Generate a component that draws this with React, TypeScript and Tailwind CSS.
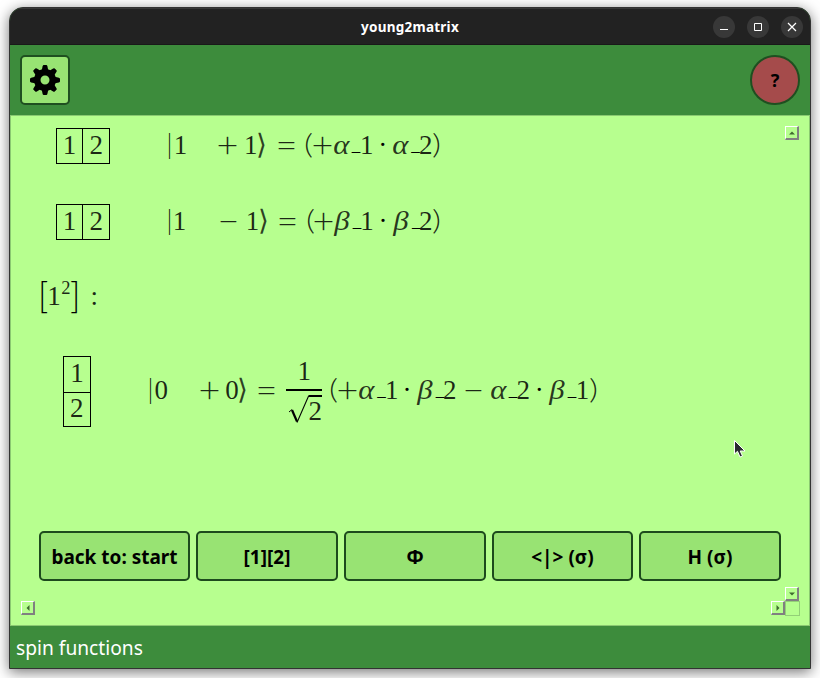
import React from "react";

type Kind = "num" | "greek" | "op" | "dot" | "bar" | "paren" | "angle" | "under" | "bracket" | "sup" | "colon";
type Glyph = [string, number, Kind];

const kinds: Record<Kind, string> = {
  num: "font-['Liberation_Serif',serif] text-[27px] text-black/85",
  greek: "font-['Liberation_Serif',serif] italic text-[28px] text-black/80 scale-x-[1.1]",
  op: "font-['Lato',sans-serif] font-light text-[36px] text-black/85 translate-y-[4px] scale-x-[1.05]",
  dot: "font-['Liberation_Serif',serif] text-[27px]",
  bar: "font-['Lato',sans-serif] font-light text-[27px] text-black/90",
  paren: "font-['Lato',sans-serif] font-light text-[27px] text-black/85 scale-x-[1.3]",
  angle: "font-['DejaVu_Sans',sans-serif] font-extralight text-[28px] text-black/75",
  under: "font-['Liberation_Serif',serif] text-[17px] -translate-y-[3px]",
  bracket: "font-['Lato',sans-serif] font-light text-[35px] translate-y-[3px]",
  sup: "font-['Liberation_Serif',serif] text-[18.5px] text-black/85 -translate-y-[11px]",
  colon: "font-['Liberation_Serif',serif] text-[27px] text-black/85",
};

/* Each glyph is centred on its own x, measured from the left of the line. */
function Line({ glyphs, className = "" }: { glyphs: Glyph[]; className?: string }) {
  return (
    <div className={`flex items-baseline leading-[0] ${className}`}>
      <span className="h-[25px] w-0 shrink-0" />
      {glyphs.map(([c, x, kind], i) => (
        <span
          key={i}
          className="flex w-0 shrink-0 justify-center whitespace-pre"
          style={{ marginLeft: x - (i ? glyphs[i - 1][1] : 0) }}
        >
          <span className={`block ${kinds[kind]}`}>{c}</span>
        </span>
      ))}
    </div>
  );
}

const plusLine: Glyph[] = [
  ["|", 148.5, "bar"], ["1", 159.5, "num"], ["+", 206.7, "op"], ["1", 229.7, "num"], ["⟩", 240.5, "angle"],
  ["=", 265, "op"], ["(", 287.5, "paren"], ["+", 301.7, "op"], ["α", 320.5, "greek"], ["_", 335, "under"],
  ["1", 345.7, "num"], ["·", 361.7, "dot"], ["α", 379.5, "greek"], ["_", 394.5, "under"], ["2", 404.7, "num"],
  [")", 416, "paren"],
];

const minusLine: Glyph[] = [
  ["|", 148.5, "bar"], ["1", 158.5, "num"], ["−", 207.7, "op"], ["1", 231.5, "num"], ["⟩", 242.5, "angle"],
  ["=", 266, "op"], ["(", 289.3, "paren"], ["+", 302.7, "op"], ["β", 321, "greek"], ["_", 336, "under"],
  ["1", 346, "num"], ["·", 362, "dot"], ["β", 380, "greek"], ["_", 395.3, "under"], ["2", 404.7, "num"],
  [")", 416, "paren"],
];

const zeroLeft: Glyph[] = [
  ["|", 129.5, "bar"], ["0", 140.3, "num"], ["+", 188.7, "op"], ["0", 211, "num"], ["⟩", 221.5, "angle"], ["=", 245.5, "op"],
];

const zeroRight: Glyph[] = [
  ["(", 11.5, "paren"], ["+", 25.7, "op"], ["α", 44.5, "greek"], ["_", 59.5, "under"], ["1", 69.7, "num"],
  ["·", 85, "dot"], ["β", 103, "greek"], ["_", 118, "under"], ["2", 127.7, "num"], ["−", 151, "op"],
  ["α", 176.5, "greek"], ["_", 191, "under"], ["2", 201.3, "num"], ["·", 217.3, "dot"], ["β", 235.5, "greek"],
  ["_", 250, "under"], ["1", 260.5, "num"], [")", 271.7, "paren"],
];

const partition: Glyph[] = [
  ["[", 22.3, "bracket"], ["1", 33, "num"], ["2", 45, "sup"], ["]", 54.2, "bracket"], [":", 73.3, "colon"],
];

function RowTableau() {
  return (
    <div className="-mr-[89px] ml-[35px] flex h-9 w-[54px] shrink-0 border border-black">
      <Line className="w-[26px] border-r border-black" glyphs={[["1", 12.5, "num"]]} />
      <Line glyphs={[["2", 13.3, "num"]]} />
    </div>
  );
}

function ColumnTableau() {
  return (
    <div className="-mr-[70px] ml-[42px] h-[71px] w-[28px] shrink-0 border border-black">
      <Line className="h-9 border-b border-black" glyphs={[["1", 13, "num"]]} />
      <Line className="-mt-px" glyphs={[["2", 12.7, "num"]]} />
    </div>
  );
}

type Dir = "up" | "down" | "left" | "right";
const arrows: Record<Dir, string> = {
  up: "M3 7.5h6L6 4.5z",
  down: "M3 4.5h6L6 7.5z",
  left: "M7.5 3v6L4.5 6z",
  right: "M4.5 3v6L7.5 6z",
};

function ScrollButton({ dir }: { dir: Dir }) {
  return (
    <button className="h-[14px] w-[14px] shrink-0 border-t border-r-2 border-b-2 border-l border-t-white border-r-[#808080] border-b-[#808080] border-l-white bg-[#b7ff8f]">
      <svg className="block" width="11" height="11" viewBox="0 0 11 11"><path d={arrows[dir]} fill="#3f6b2f" /></svg>
    </button>
  );
}

function NavButton({ label, wide = "w-[142px]" }: { label: string; wide?: string }) {
  return (
    <button className={`h-[50px] shrink-0 rounded-[5px] border-2 border-[#1d4a1d] bg-[#98e373] pt-[2px] text-[19px] font-bold whitespace-nowrap ${wide}`}>
      {label}
    </button>
  );
}

export default function App() {
  return (
    <div className="h-[678px] w-[820px] overflow-hidden bg-white pt-[7px] pl-[9px] font-['Noto_Sans','Open_Sans',sans-serif] text-black">
      <div className="flex h-[662px] w-[802px] flex-col overflow-hidden rounded-t-[14px] border border-[#333333] bg-[#3d8c3c] shadow-[0_3px_14px_rgba(0,0,0,0.55)]">
        <header className="grid h-[37px] shrink-0 grid-cols-[1fr_auto_1fr] items-center border-t border-b border-t-[#383838] border-b-[#191919] bg-[#222222] text-white">
          <span />
          <h1 className="pt-px text-[13.5px] font-bold tracking-[0.25px]">young2matrix</h1>
          <div className="mr-[7px] flex justify-end gap-3">
            <span className="grid h-[22px] w-[22px] place-items-center rounded-full bg-[#383838]">
              <svg width="10" height="10"><path d="M1 7.5h8" stroke="white" /></svg>
            </span>
            <span className="grid h-[22px] w-[22px] place-items-center rounded-full bg-[#383838]">
              <svg width="10" height="10"><path d="M1.5 1.5h7v7h-7z" stroke="white" fill="none" /></svg>
            </span>
            <span className="grid h-[22px] w-[22px] place-items-center rounded-full bg-[#383838]">
              <svg width="10" height="10"><path d="M1 1l8 8M9 1L1 9" stroke="white" strokeWidth="1.2" /></svg>
            </span>
          </div>
        </header>

        <div className="flex h-[70px] shrink-0 items-center justify-between px-[10px]">
          <button className="grid h-[50px] w-[50px] place-items-center rounded-[5px] border-2 border-[#1f4f20] bg-[#98e373]">
            <svg width="30" height="30" viewBox="0 0 24 24" fill="black">
              <path fillRule="evenodd" d="M12 3.2a8.8 8.8 0 1 0 0 17.6a8.8 8.8 0 0 0 0-17.6M12 8.4a3.6 3.6 0 1 1 0 7.2a3.6 3.6 0 0 1 0-7.2" />
              {[0, 45, 90, 135, 180, 225, 270, 315].map((a) => (
                <path key={a} d="M9.2 5L10.1 .9Q10.3 0 11 0h2q.7 0 .9.9L14.8 5z" transform={`rotate(${a} 12 12)`} />
              ))}
            </svg>
          </button>
          <button className="grid h-[50px] w-[50px] place-items-center rounded-full border-2 border-[#1f4f20] bg-[#a54b4b] pt-px text-[18px] font-bold">?</button>
        </div>

        <main className="relative grid h-[511px] shrink-0 grid-cols-[764px_15px] grid-rows-[475px_15px] border border-[#8ac971] bg-[#b7ff8f] p-[10px]">
          <section>
            <div className="flex h-[76px] pt-[2px]">
              <RowTableau />
              <Line className="h-9 pt-px" glyphs={plusLine} />
            </div>
            <div className="flex h-[76px] pt-[2px]">
              <RowTableau />
              <Line className="h-9 pt-px" glyphs={minusLine} />
            </div>
            <div className="flex h-[78px] pt-[2px]">
              <Line glyphs={partition} />
            </div>
            <div className="flex h-[175px]">
              <ColumnTableau />
              <div className="w-[265px] shrink-0 pt-[18px]"><Line glyphs={zeroLeft} /></div>
              <div className="w-9 shrink-0">
                <div className="h-[36px] border-b-2 border-black"><Line className="-mt-px" glyphs={[["1", 18.3, "num"]]} /></div>
                <div className="flex pt-[4px]">
                  <svg className="-mr-[36px] shrink-0" width="36" height="29" viewBox="0 0 36 29" fill="none" stroke="black">
                    <path d="M3 17L6 14.5" strokeWidth="1" />
                    <path d="M6 15L11 26.5" strokeWidth="2.2" />
                    <path d="M11 27.5L22.6 1" strokeWidth="1.1" />
                    <path d="M22.5 1H36" strokeWidth="2" />
                  </svg>
                  <Line glyphs={[["2", 29.3, "num"]]} />
                </div>
              </div>
              <div className="shrink-0 pt-[18px]"><Line glyphs={zeroRight} /></div>
            </div>
            <nav className="ml-[18px] flex gap-[6px]">
              <NavButton label="back to: start" wide="w-[151px]" />
              <NavButton label="[1][2]" />
              <NavButton label="Φ" />
              <NavButton label="<|> (σ)" wide="w-[141px]" />
              <NavButton label="H (σ)" />
            </nav>
          </section>
          <div className="flex flex-col justify-between"><ScrollButton dir="up" /><ScrollButton dir="down" /></div>
          <div className="flex justify-between"><ScrollButton dir="left" /><ScrollButton dir="right" /></div>
          <div className="border border-[#93cf77]" />
          <svg className="absolute top-[323px] left-[722px]" width="14" height="22" viewBox="0 0 14 22">
            <path d="M1.5 1.5V15l3-2.7L7 18l2.5-1-2.3-5H12z" fill="#292c30" stroke="white" strokeWidth="1" />
          </svg>
        </main>

        <footer className="flex flex-1 items-center pt-[2px] pl-[6px] text-[19.2px] text-white">spin functions</footer>
      </div>
    </div>
  );
}
